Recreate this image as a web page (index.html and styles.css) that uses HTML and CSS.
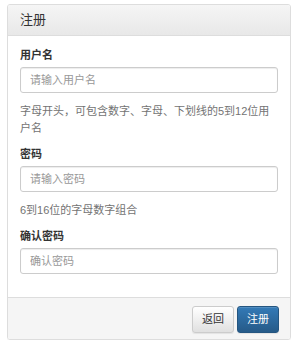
FILE: index.html
```html
<!DOCTYPE html>
<html>
  <head>
    <title>注册</title>
    <meta charset="UTF-8">
    <meta name="viewport" content="width=device-width,initial-scale=1">
    <link rel="stylesheet" href="styles.css">
  </head>

  <body>
    <div class="panel">
      <div class="panel-heading">注册</div>

      <form class="panel-body">
        <div class="form-group">
          <label for="username">用户名</label>
          <input id="username" type="text" placeholder="请输入用户名">
          <p class="help-block">字母开头，可包含数字、字母、下划线的5到12位用户名</p>
        </div>

        <div class="form-group">
          <label for="password">密码</label>
          <input id="password" type="password" placeholder="请输入密码">
          <p class="help-block">6到16位的字母数字组合</p>
        </div>

        <div class="form-group">
          <label for="confirm">确认密码</label>
          <input id="confirm" type="password" placeholder="确认密码">
        </div>
      </form>

      <div class="panel-footer">
        <button class="btn btn-default">返回</button>
        <button class="btn btn-primary">注册</button>
      </div>
    </div>
  </body>

</html>
```

FILE: styles.css
```css
html * {
  box-sizing: border-box;
}

body {
  margin: 4px 9px 0 7px;
  background: #fff;
  color: #333;
  font-family: "Liberation Sans", "Noto Sans CJK SC", sans-serif;
  font-size: 11px;
}

.panel {
  width: 284px;
  border: solid 1px #ddd;
  border-radius: 3px;
  box-shadow: 0 1px 1px rgba(0, 0, 0, 0.05);
  overflow: hidden;
}

.panel-heading {
  padding: 7px 12px;
  font-size: 13px;
  line-height: 16px;
  background: linear-gradient(to bottom, #f5f5f5, #e8e8e8);
  border-bottom: solid 1px #ddd;
}

.panel-body {
  margin: 0;
  padding: 11px 12px 23px;
}

.form-group {
  margin-bottom: 9px;
}

.form-group:last-child {
  margin-bottom: 0;
}

label {
  display: block;
  margin-bottom: 4px;
  font-weight: bold;
  line-height: 16px;
}

input {
  display: block;
  width: 100%;
  height: 26px;
  padding: 4px 9px;
  border: solid 1px #ccc;
  border-radius: 3px;
  box-shadow: inset 0 1px 1px rgba(0, 0, 0, 0.075);
  font-family: inherit;
  font-size: 11px;
  color: #555;
}

input::placeholder {
  color: #999;
}

.help-block {
  margin: 10px 0 0;
  line-height: 17px;
  color: #737373;
}

.panel-footer {
  padding: 8px 11px 6px;
  text-align: right;
  background: #f5f5f5;
  border-top: solid 1px #ddd;
  font-size: 0;
}

.btn {
  height: 27px;
  margin-left: 3px;
  padding: 5px 9px;
  border: solid 1px;
  border-radius: 3px;
  font-family: inherit;
  font-size: 11px;
  line-height: 15px;
  cursor: pointer;
}

.btn-default {
  color: #333;
  border-color: #ccc;
  background: linear-gradient(to bottom, #fff, #e0e0e0);
  box-shadow: inset 0 1px 0 rgba(255, 255, 255, 0.15), 0 1px 1px rgba(0, 0, 0, 0.075);
}

.btn-primary {
  color: #fff;
  border-color: #245580;
  background: linear-gradient(to bottom, #337ab7, #265a88);
  box-shadow: inset 0 1px 0 rgba(255, 255, 255, 0.15), 0 1px 1px rgba(0, 0, 0, 0.075);
}
```
